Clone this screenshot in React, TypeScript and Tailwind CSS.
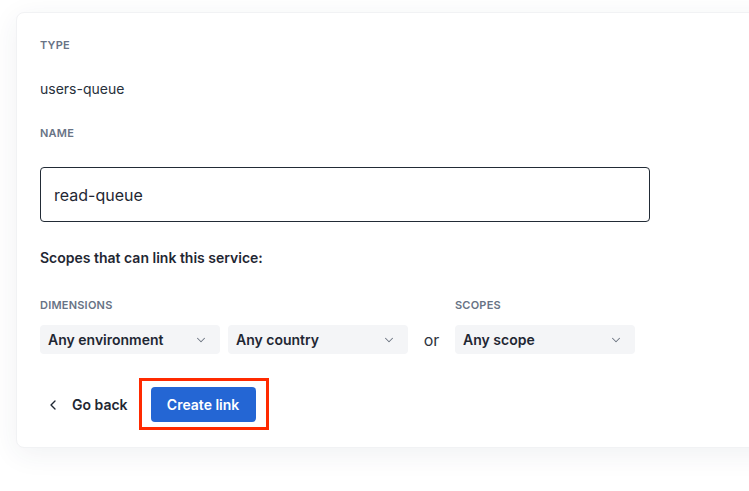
import { ChevronDown, ChevronLeft } from "lucide-react";

const Label = ({ children }: { children: string }) => (
  <div className="text-[11px] leading-4 font-semibold uppercase tracking-[0.02em] text-[#687385]">
    {children}
  </div>
);

const SelectBox = ({ value, width }: { value: string; width: string }) => (
  <div
    className={`flex items-center justify-between h-[29px] pl-2 pr-3 rounded bg-[#f4f5f7] ${width}`}
  >
    <span className="text-sm font-semibold text-[#1f2733]">{value}</span>
    <ChevronDown className="w-3.5 h-3.5 text-[#6b7480]" strokeWidth={1.75} />
  </div>
);

export default function App() {
  return (
    <div
      className="min-h-screen bg-white pt-3 pl-4 overflow-hidden"
      style={{ fontFamily: "Inter, 'Noto Sans', sans-serif" }}
    >
      <div className="w-[780px] rounded-lg bg-white border border-[#f1f2f4] shadow-[0_6px_28px_rgba(40,52,80,0.07)] px-[23px] pt-[24px] pb-[25px]">
        <Label>Type</Label>
        <div className="mt-[26px] text-sm leading-5 text-[#27303b]">users-queue</div>

        <div className="mt-[26px]">
          <Label>Name</Label>
        </div>
        <div className="mt-[26px] w-[610px] h-[55px] flex items-center px-[13px] rounded border-[1.5px] border-[#222b36]">
          <span className="text-base text-[#1f2733]">read-queue</span>
        </div>

        <div className="mt-[26px] text-sm leading-5 font-semibold text-[#1f2733]">
          Scopes that can link this service:
        </div>

        <div className="mt-[29px] flex items-start">
          <div>
            <Label>Dimensions</Label>
            <div className="mt-3 flex gap-2">
              <SelectBox value="Any environment" width="w-[180px]" />
              <SelectBox value="Any country" width="w-[180px]" />
            </div>
          </div>
          <div className="mt-[33px] w-[47px] text-center text-base leading-5 text-[#2d3540]">or</div>
          <div>
            <Label>Scopes</Label>
            <div className="mt-3">
              <SelectBox value="Any scope" width="w-[180px]" />
            </div>
          </div>
        </div>

        <div className="mt-[33px] flex items-center">
          <div className="flex items-center gap-[11px] pl-[5px] pr-[23px]">
            <ChevronLeft className="w-4 h-4 text-[#1f2733]" strokeWidth={2} />
            <span className="text-sm font-semibold text-[#1f2733]">Go back</span>
          </div>
          <div className="relative">
            <button className="h-[35px] w-[105px] rounded bg-[#2466d4] text-sm font-semibold text-white">
              Create link
            </button>
            <span className="absolute -left-3 -right-[13px] -top-[9px] -bottom-2 border-[3px] border-[#ff2a00] pointer-events-none" />
          </div>
        </div>
      </div>
    </div>
  );
}
